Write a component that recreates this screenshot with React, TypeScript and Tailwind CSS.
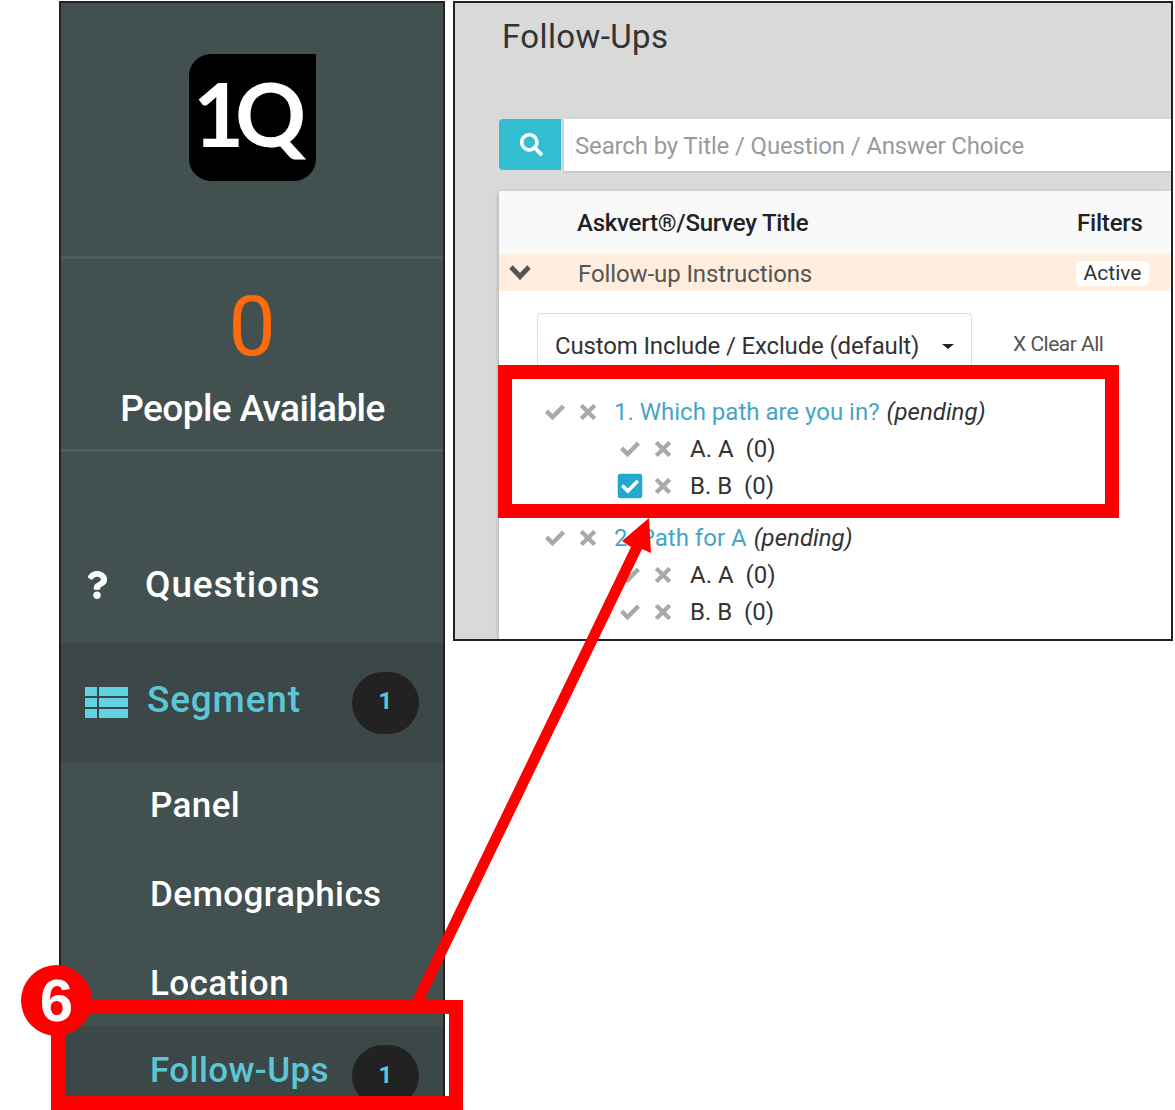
import { FaCheckSquare, FaQuestion, FaSearch } from "react-icons/fa";
import { ImCheckmark, ImCross } from "react-icons/im";

function Badge() {
  return (
    <span className="ml-auto mr-[24px] w-[67px] h-[62px] rounded-full bg-[#222222] text-[#5cc6d6] flex items-center justify-center pb-[3px] text-[24px] font-bold">
      1
    </span>
  );
}

function SubItem({ children, className }: { children: string; className: string }) {
  return <div className={`pl-[89px] flex items-center text-[35px] font-medium text-white tracking-[0.4px] ${className}`}>{children}</div>;
}

function ListIcon() {
  return (
    <svg width="43" height="31" viewBox="0 0 43 31" fill="#62d3e2">
      <rect x="0" y="0" width="12" height="9" />
      <rect x="14" y="0" width="29" height="9" />
      <rect x="0" y="11" width="12" height="9" />
      <rect x="14" y="11" width="29" height="9" />
      <rect x="0" y="22" width="12" height="9" />
      <rect x="14" y="22" width="29" height="9" />
    </svg>
  );
}

function Sidebar() {
  return (
    <aside className="w-[386px] h-[1109px] shrink-0 border-x-2 border-t-2 border-[#222222] bg-[#435050] flex flex-col overflow-hidden">
      <div className="h-[256px] shrink-0 flex justify-center pt-[51px] border-b-[3px] border-[#4f5c5c]">
        <div className="w-[127px] h-[127px] bg-black rounded-[22px] rounded-tr-none flex items-center justify-center pb-[10px] pr-[14px] text-white text-[88px] font-bold font-['Lato',sans-serif] tracking-[-9px] leading-none">
          1Q
        </div>
      </div>
      <div className="h-[193px] shrink-0 flex flex-col items-center border-b-[3px] border-[#4f5c5c]">
        <span className="text-[#ff6a0d] text-[84px] leading-none mt-[26px]">0</span>
        <span className="text-white text-[37px] font-medium mt-[12px] ml-[1px] tracking-[-0.6px]">People Available</span>
      </div>
      <div className="h-[191px] shrink-0 pl-[24px] flex items-end pb-[31px] text-white">
        <FaQuestion className="w-[24px] h-[28px] mb-[13px]" />
        <span className="ml-[36px] text-[37px] font-medium tracking-[0.9px]">Questions</span>
      </div>
      <div className="h-[119px] shrink-0 pl-[24px] flex items-center bg-[#3c4747] text-[#5cc6d6]">
        <ListIcon />
        <span className="ml-[19px] mb-[6px] text-[37px] font-medium tracking-[0.8px]">Segment</span>
        <Badge />
      </div>
      <div className="h-[264px] shrink-0">
        <SubItem className="h-[89px]">Panel</SubItem>
        <SubItem className="h-[88px]">Demographics</SubItem>
        <SubItem className="h-[91px]">Location</SubItem>
      </div>
      <div className="flex-1 pl-[89px] flex items-start pt-[19px] bg-[#3c4747] text-[#5cc6d6]">
        <span className="text-[35px] font-medium tracking-[0.4px]">Follow-Ups</span>
        <Badge />
      </div>
    </aside>
  );
}

function Marks({ checked }: { checked?: boolean }) {
  return (
    <span className="flex items-center w-[58px] shrink-0 text-[#a9a9a9]">
      {checked ? (
        <FaCheckSquare className="w-[28px] h-[28px] -ml-[3px] text-[#24a8d0]" />
      ) : (
        <ImCheckmark className="w-[22px] h-[20px]" />
      )}
      <ImCross className={checked ? "w-[16px] h-[16px] ml-[11px]" : "w-[16px] h-[16px] ml-[14px]"} />
    </span>
  );
}

function Question({ title, checked }: { title: string; checked?: boolean }) {
  return (
    <div>
      <div className="h-[37px] pl-[45px] flex items-center">
        <Marks />
        <span className="ml-[12px] text-[#45a6c9]">{title}</span>
        <span className="ml-[7px] italic text-[#333333]">(pending)</span>
      </div>
      <div className="h-[37px] pl-[120px] flex items-center text-[#333333]">
        <Marks />
        <span className="ml-[13px] whitespace-pre">A. A  (0)</span>
      </div>
      <div className="h-[37px] pl-[120px] flex items-center text-[#333333]">
        <Marks checked={checked} />
        <span className="ml-[13px] whitespace-pre">B. B  (0)</span>
      </div>
    </div>
  );
}

function FollowUps() {
  return (
    <main className="w-[720px] h-[640px] shrink-0 border-2 border-[#222222] bg-[#d9d9d9] overflow-hidden pl-[44px] text-[24px]">
      <h1 className="h-[116px] pl-[3px] pt-[14px] text-[33px] leading-[40px] text-[#333333] tracking-[0.4px]">Follow-Ups</h1>
      <div className="h-[52px] flex">
        <div className="w-[62px] h-[51px] bg-[#33bdd0] rounded-l-[4px] flex items-center justify-center text-white">
          <FaSearch className="w-[23px] h-[23px] ml-[2px]" />
        </div>
        <div className="ml-[3px] flex-1 bg-white pl-[11px] pt-[2px] flex items-center text-[#9a9a9a] tracking-[-0.15px] shadow-[0_1px_2px_rgba(0,0,0,0.15)]">
          Search by Title / Question / Answer Choice
        </div>
      </div>
      <section className="mt-[20px] h-[460px] bg-white rounded-tl-[6px] shadow-[-2px_0_3px_rgba(0,0,0,0.12)]">
        <div className="h-[63px] bg-[#f9f9f9] flex items-center font-medium text-[#222222]">
          <span className="ml-[78px] w-[500px] shrink-0 tracking-[-0.25px]">Askvert®/Survey Title</span>
          <span className="tracking-[-0.2px]">Filters</span>
        </div>
        <div className="h-[37px] bg-[#ffeedd] flex items-center text-[#555555]">
          <svg className="ml-[10px] shrink-0" width="22" height="15" viewBox="0 0 22 15" fill="none" stroke="currentColor" strokeWidth="5">
            <path d="M2 2 L11 11.5 L20 2" />
          </svg>
          <span className="ml-[47px] pt-[3px] w-[498px] shrink-0 tracking-[-0.1px]">Follow-up Instructions</span>
          <span className="w-[73px] h-[25px] mt-[2px] bg-white rounded-[6px] flex items-center justify-center text-[21px] text-[#333333]">
            Active
          </span>
        </div>
        <div className="h-[73px] flex items-start pl-[38px] pt-[23px]">
          <div className="w-[435px] h-[60px] -mt-[1px] pl-[17px] pr-[17px] border border-[#dddddd] rounded-[4px] flex items-center text-[#333333] pt-[6px] shrink-0 tracking-[-0.15px]">
            Custom Include / Exclude (default)
            <span className="ml-auto w-0 h-0 border-x-[6px] border-x-transparent border-t-[5px] border-t-[#222222]" />
          </div>
          <span className="ml-[41px] text-[21px] text-[#555555] mt-[15px] whitespace-nowrap tracking-[-0.5px]">X Clear All</span>
        </div>
        <div className="pt-[29px]">
          <Question title="1. Which path are you in?" checked />
          <div className="h-[15px]" />
          <Question title="2. Path for A" />
        </div>
      </section>
    </main>
  );
}

export default function App() {
  return (
    <div className="relative w-[1175px] h-[1110px] overflow-hidden bg-white font-['Roboto',sans-serif]">
      <div className="flex gap-[8px] pl-[59px] pt-[1px]">
        <Sidebar />
        <FollowUps />
      </div>

      {/* callout drawn over the screenshot */}
      <div className="absolute left-[498px] top-[365px] w-[621px] h-[153px] border-[14px] border-[#ff0000]" />
      <div className="absolute left-[51px] top-[1000px] w-[412px] h-[110px] border-[14px] border-[#ff0000]" />
      <svg className="absolute left-0 top-0" width="1175" height="1110" viewBox="0 0 1175 1110">
        <polygon fill="#ff0000" points="412,1000 631,547 622,541 649,518 651,553 642,549 424,1000" />
      </svg>
      <div className="absolute left-[21px] top-[965px] w-[71px] h-[71px] rounded-full bg-[#ff0000] flex items-center justify-center text-white text-[60px] font-bold font-['Liberation_Sans',sans-serif] leading-none">
        6
      </div>
    </div>
  );
}
